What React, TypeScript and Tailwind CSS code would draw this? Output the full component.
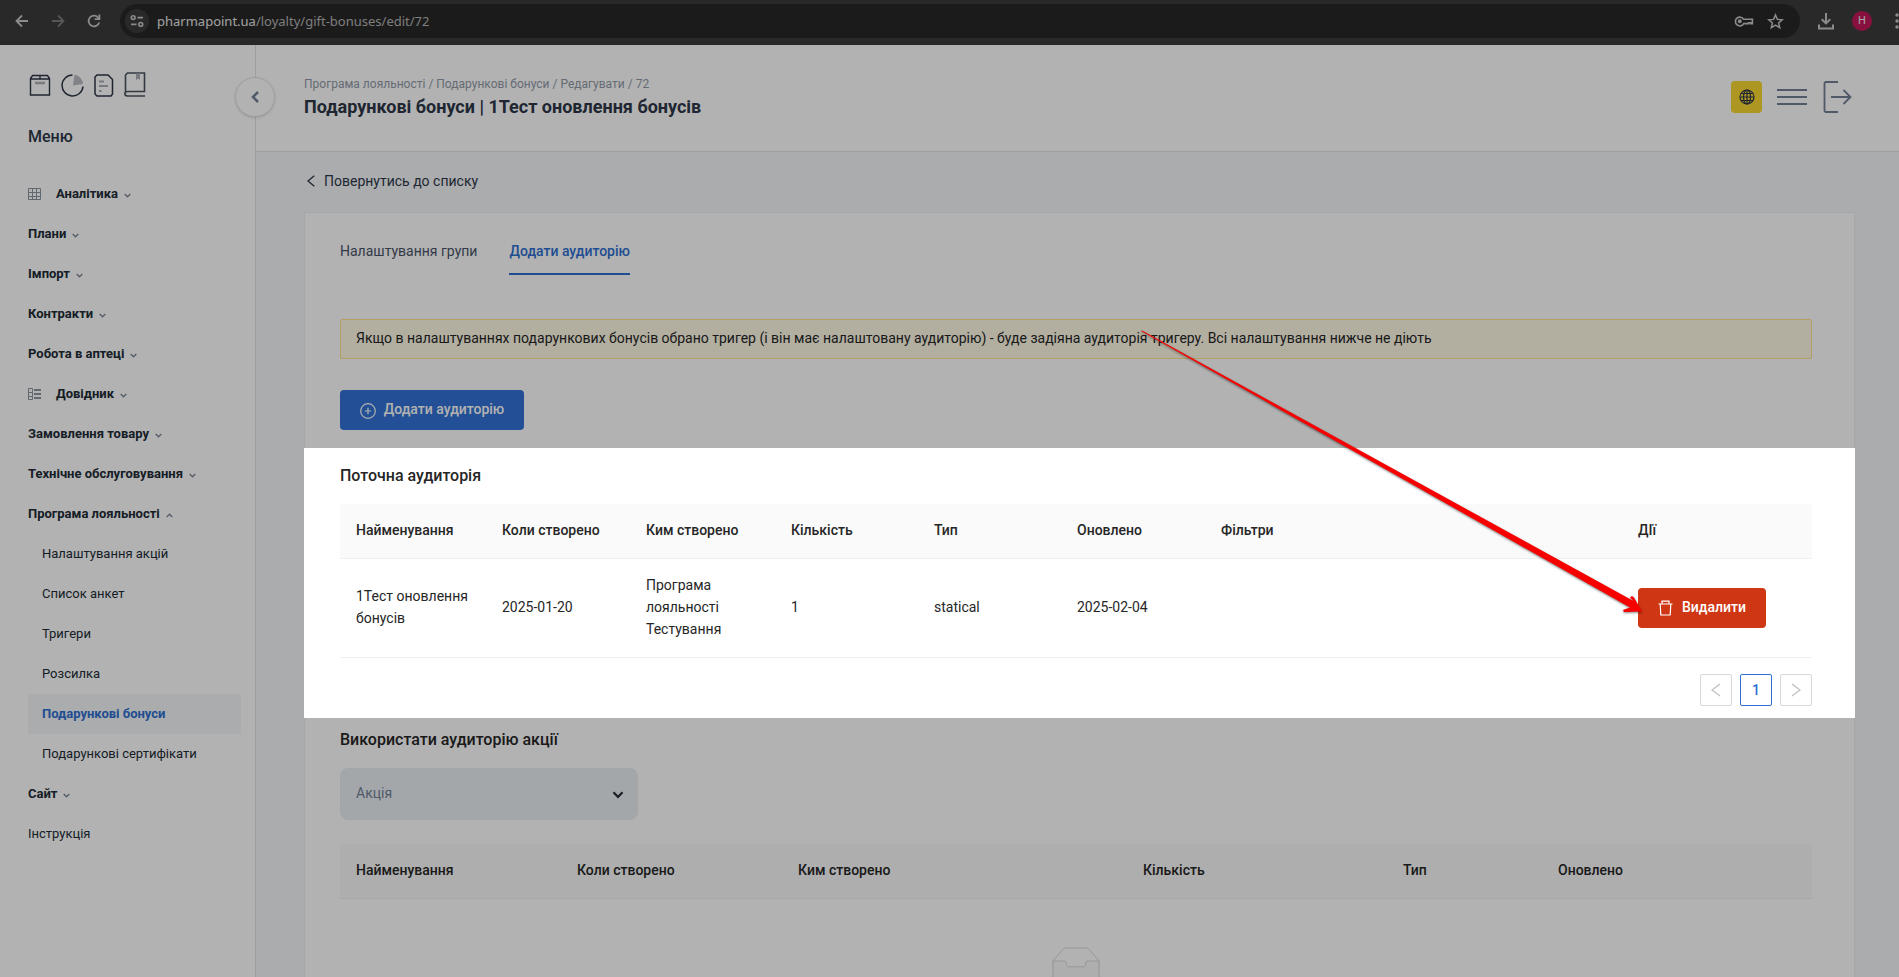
import React from "react";

type MenuItem = {
    label: string;
    icon?: "grid" | "list";
    plain?: boolean;
    open?: boolean;
    children?: string[];
};

const menu: MenuItem[] = [
    { label: "Аналітика", icon: "grid" },
    { label: "Плани" },
    { label: "Імпорт" },
    { label: "Контракти" },
    { label: "Робота в аптеці" },
    { label: "Довідник", icon: "list" },
    { label: "Замовлення товару" },
    { label: "Технічне обслуговування" },
    {
        label: "Програма лояльності",
        open: true,
        children: ["Налаштування акцій", "Список анкет", "Тригери", "Розсилка", "Подарункові бонуси", "Подарункові сертифікати"],
    },
    { label: "Сайт" },
    { label: "Інструкція", plain: true },
];

const currentRows = [
    { name: "1Тест оновлення бонусів", created: "2025-01-20", author: "Програма лояльності Тестування", count: 1, type: "statical", updated: "2025-02-04", filters: "" },
];

const BrowserBar = () => (
    <div className="flex h-[45px] shrink-0 items-center overflow-hidden bg-[#3c3c3c] pb-[3px] text-[#c7c7c7]">
        <div className="flex w-[120px] shrink-0 items-center gap-5 pl-[14px]">
            <button aria-label="Назад">
                <svg width="16" height="16" viewBox="0 0 16 16" fill="none" stroke="currentColor" strokeWidth="1.8"><path d="M14 8H3M8 2.5 2.5 8 8 13.5" /></svg>
            </button>
            <button aria-label="Вперед" className="text-[#7b7b7b]">
                <svg width="16" height="16" viewBox="0 0 16 16" fill="none" stroke="currentColor" strokeWidth="1.8"><path d="M2 8h11M8 2.5 13.5 8 8 13.5" /></svg>
            </button>
            <button aria-label="Оновити">
                <svg width="16" height="16" viewBox="0 0 16 16" fill="none" stroke="currentColor" strokeWidth="1.8"><path d="M13.2 9.5A5.4 5.4 0 1 1 12 4.3L13.2 5.5" /><path d="M13.4 1.5V6.2H8.7" /></svg>
            </button>
        </div>
        <div className="flex h-[34px] flex-1 items-center rounded-full bg-[#282828] pl-[5px] pr-4">
            <button aria-label="Дані сайту" className="flex size-6 items-center justify-center rounded-full bg-[#3c3c3c]">
                <svg width="14" height="14" viewBox="0 0 14 14" fill="none" stroke="currentColor" strokeWidth="1.6"><circle cx="3.2" cy="3.6" r="1.9" /><path d="M7.5 3.6H13M1 10.4h5.5" /><circle cx="10.8" cy="10.4" r="1.9" /></svg>
            </button>
            <span className="ml-2 flex-1 font-['Noto_Sans',sans-serif] text-[13px] leading-5 text-[#b5b5b5]">
                <span className="text-[#e6e6e6]">pharmapoint.ua</span>/loyalty/gift-bonuses/edit/72
            </span>
            <button aria-label="Паролі" className="mr-[13px]">
                <svg width="20" height="14" viewBox="0 0 20 14" fill="none" stroke="currentColor" strokeWidth="1.6"><path d="M9.6 5.3H18.4V9.6H16.8V8.8H14.6V9.6H9.7A4.4 4.4 0 1 1 9.6 5.3Z" /><circle cx="5.8" cy="7.2" r="1.2" fill="currentColor" /></svg>
            </button>
            <button aria-label="Закладка">
                <svg width="17" height="17" viewBox="0 0 17 17" fill="none" stroke="currentColor" strokeWidth="1.5"><path d="m8.5 2 1.9 4.4 4.8.4-3.6 3.1 1.1 4.7-4.2-2.5-4.2 2.5 1.1-4.7L1.8 6.8l4.8-.4Z" /></svg>
            </button>
        </div>
        <div className="ml-[18px] flex w-[81px] shrink-0 items-center">
            <button aria-label="Завантаження">
                <svg width="16" height="17" viewBox="0 0 16 17" fill="none" stroke="currentColor" strokeWidth="2"><path d="M8 0v10M3.8 6.2 8 10.4l4.2-4.2M1 11.5V15.5H15V11.5" /></svg>
            </button>
            <span className="ml-[18px] flex size-5 items-center justify-center rounded-full bg-[#c2185b] font-['Roboto',sans-serif] text-[11px] text-[#ececec]">H</span>
            <svg className="ml-[23px]" width="4" height="16" viewBox="0 0 4 16" fill="currentColor"><circle cx="2" cy="2" r="1.7" /><circle cx="2" cy="8" r="1.7" /><circle cx="2" cy="14" r="1.7" /></svg>
        </div>
    </div>
);

const ItemIcon = ({ kind }: { kind: "grid" | "list" }) => (
    <svg className="mr-[15px]" width="13" height="12" viewBox="0 0 13 12" fill="none" stroke="#8a95a3">
        {kind === "grid" ? (
            <path d="M.5.5h12v11H.5ZM.5 4.500h12M.5 8.500h12M4.500.5v11M8.500.5v11" />
        ) : (
            <path d="M.5.5h4v11h-4ZM.5 4.500h4M.5 8.500h4M6 1.500h7M6 2.500h7M6 5.500h7M6 6.500h7M6 9.500h7M6 10.500h7" />
        )}
    </svg>
);

const Sidebar = () => (
    <aside className="relative w-64 shrink-0 border-r border-[#dfe3e8] bg-white">
        <div className="flex h-[52px] items-end gap-[10px] pl-[29px]">
            <svg width="22" height="23" viewBox="0 0 22 23" fill="none" stroke="#2f3747" strokeWidth="1.400"><path d="M1.500 4.500V21h19V4.500L18.500 1.500H3.500ZM1.500 5H20.500M11 1.500V5" /><path d="M6 9h10" stroke="#aeb3ba" strokeWidth="2.600" /></svg>
            <svg width="23" height="23" viewBox="0 0 23 23" fill="none"><path d="M11.500 1A10.500 10.500 0 1 0 22 12.500" stroke="#2f3747" strokeWidth="1.500" /><path d="M13.500 0.500 12 11.500l10-1.500A10.500 10.500 0 0 0 13.500.5Z" fill="#b9bcc2" /></svg>
            <svg width="20" height="23" viewBox="0 0 20 23" fill="none" stroke="#2f3747" strokeWidth="1.500"><path d="M3 1h11l4.500 4.500V20L17 22H3L1 20V3Z" /><path d="M5 7.500h5M5 12h9M5 17h2.500" stroke="#a9aeb5" strokeWidth="2" /></svg>
            <svg width="22" height="25" viewBox="0 0 22 25" fill="none" stroke="#4b5360" strokeWidth="1.600"><path d="M21 24H3.500C0 24 0 19.500 3.500 19.500H20.500V1H3.500L1.500 3V21.500" /><path d="M12 1.500V8l2-1.500L16 8V1.500Z" fill="#a9aeb5" stroke="none" /></svg>
        </div>
        <h2 className="mt-7 pl-7 text-base font-medium leading-6 text-[#2d3748]">Меню</h2>
        <nav className="mt-[25px] pl-7 pr-[14px] text-[13px] text-[#212b36]">
            {menu.map((item) => (
                <div key={item.label}>
                    {item.plain ? (
                        <a href="#" className="flex h-10 items-center">{item.label}</a>
                    ) : (
                        <button className="flex h-10 w-full items-center font-bold" aria-expanded={!!item.open}>
                            {item.icon && <ItemIcon kind={item.icon} />}
                            {item.label}
                            <svg className="ml-[6px] mt-[3px]" width="7" height="5" viewBox="0 0 7 5" fill="none" stroke="#7c8795" strokeWidth="1.400">
                                <path d={item.open ? "M.7 4 3.500 1.200 6.300 4" : "M.7 1 3.500 3.800 6.300 1"} />
                            </svg>
                        </button>
                    )}
                    {item.children?.map((child) => (
                        <a
                            key={child}
                            href="#"
                            className={`flex h-10 items-center pl-[14px] ${child === "Подарункові бонуси" ? "bg-[#f4f6f9] font-bold text-[#2e6fd0]" : ""}`}
                        >
                            {child}
                        </a>
                    ))}
                </div>
            ))}
        </nav>
        <button aria-label="Згорнути меню" className="absolute -right-5 top-8 flex size-10 items-center justify-center rounded-full border border-[#dfe3e8] bg-white shadow-sm">
            <svg width="8" height="12" viewBox="0 0 8 12" fill="none" stroke="#718096" strokeWidth="2.500"><path d="M7 1 2 6l5 5" /></svg>
        </button>
    </aside>
);

const Header = () => (
    <header className="flex h-[107px] items-start justify-between border-b border-[#dfe3e8] bg-white pl-12 pr-[47px]">
        <div className="pt-[30px]">
            <div className="text-xs leading-[18px] text-[#919aa8]">Програма лояльності / Подарункові бонуси / Редагувати / 72</div>
            <h1 className="mt-[3px] text-lg font-bold leading-[22px] text-[#2d3748]">Подарункові бонуси | 1Тест оновлення бонусів</h1>
        </div>
        <div className="flex items-center gap-[15px] pt-9">
            <button aria-label="Мова" className="flex h-8 w-[31px] items-center justify-center rounded bg-[#f8d730]">
                <svg width="16" height="16" viewBox="0 0 16 16" fill="none" stroke="#2d3748" strokeWidth="1.200"><circle cx="8" cy="8" r="7" /><ellipse cx="8" cy="8" rx="3.500" ry="7" /><path d="M8 1v14M1 8h14M2 4.500h12M2 11.500h12" /></svg>
            </button>
            <button aria-label="Меню">
                <svg width="30" height="16" viewBox="0 0 30 16" fill="#718096"><path d="M0 0h30v2H0zM0 7h30v2H0zM0 14h30v2H0z" /></svg>
            </button>
            <button aria-label="Вийти" className="ml-px">
                <svg width="29" height="32" viewBox="0 0 29 32" fill="none" stroke="#718096" strokeWidth="1.800"><path d="M15 1H2.500L1.500 2V30L2.500 31H15M8 16H27M20.500 9 27.500 16l-7 7" /></svg>
            </button>
        </div>
    </header>
);

// Pointer that leads to the delete button
const Arrow = () => (
    <svg className="pointer-events-none absolute -bottom-1 right-[122px] max-w-none drop-shadow-[0_1px_1px_rgba(0,0,0,0.5)]" width="510" height="310" viewBox="1134 322 510 310" fill="#f60000" aria-hidden="true">
        <path d="M1141 331 1142 330.500 1633.500 601 1630 597.500 1632 596 1634 597.500 1642 611.500 1624 612 1623 610 1630 607.500Z" />
    </svg>
);

const Th = ({ children }: { children: React.ReactNode }) => (
    <th className="border-b border-[#f0f0f0] bg-[#fafafa] px-4 pb-[17px] pt-[15px] text-left font-medium">{children}</th>
);

const Td = ({ children }: { children?: React.ReactNode }) => (
    <td className="border-b border-[#f0f0f0] px-4 pb-[17px] pt-[15px]">{children}</td>
);

const CurrentAudience = () => (
    <section className="relative z-10 -mx-px h-[270px] bg-white pl-9 pr-[43px] pt-[17px] shadow-[0_0_0_3000px_rgba(0,0,0,0.3)]">
        <h2 className="text-base font-medium leading-[22px]">Поточна аудиторія</h2>
        <table className="mt-[17px] w-full table-fixed border-separate border-spacing-0 text-sm leading-[22px]">
            <colgroup>
                <col className="w-[146px]" />
                <col className="w-[144px]" />
                <col className="w-[145px]" />
                <col className="w-[143px]" />
                <col className="w-[143px]" />
                <col className="w-[144px]" />
                <col />
                <col className="w-[190px]" />
            </colgroup>
            <thead>
                <tr>
                    <Th>Найменування</Th>
                    <Th>Коли створено</Th>
                    <Th>Ким створено</Th>
                    <Th>Кількість</Th>
                    <Th>Тип</Th>
                    <Th>Оновлено</Th>
                    <Th>Фільтри</Th>
                    <Th>ДІї</Th>
                </tr>
            </thead>
            <tbody>
                {currentRows.map((row) => (
                    <tr key={row.name}>
                        <Td>{row.name}</Td>
                        <Td>{row.created}</Td>
                        <Td>{row.author}</Td>
                        <Td>{row.count}</Td>
                        <Td>{row.type}</Td>
                        <Td>{row.updated}</Td>
                        <Td>{row.filters}</Td>
                        <td className="border-b border-[#f0f0f0] p-4">
                            <div className="relative w-32">
                                <button className="flex h-10 w-32 items-center justify-center gap-[9px] rounded bg-[#cf3614] pb-[2px] text-sm font-medium text-white">
                                    <svg className="mt-[2px]" width="15" height="16" viewBox="0 0 15 16" fill="none" stroke="white" strokeWidth="1.200"><path d="M.5 4h14M4 4V1.200h7V4M2.200 4l.6 11h9.400l.6-11" /></svg>
                                    Видалити
                                </button>
                                <Arrow />
                            </div>
                        </td>
                    </tr>
                ))}
            </tbody>
        </table>
        <div className="mt-4 flex justify-end gap-2 text-sm">
            <button aria-label="Попередня" className="flex size-8 items-center justify-center rounded-xs border border-[#d9d9d9]">
                <svg width="10" height="14" viewBox="0 0 10 14" fill="none" stroke="#c0c0c0" strokeWidth="1.300"><path d="M9 1 1 7l8 6" /></svg>
            </button>
            <button className="flex size-8 items-center justify-center rounded-xs border border-[#2e6fd0] font-medium text-[#2e6fd0]">1</button>
            <button aria-label="Наступна" className="flex size-8 items-center justify-center rounded-xs border border-[#d9d9d9]">
                <svg width="10" height="14" viewBox="0 0 10 14" fill="none" stroke="#c0c0c0" strokeWidth="1.300"><path d="m1 1 8 6-8 6" /></svg>
            </button>
        </div>
    </section>
);

const PromoAudience = () => (
    <section className="pl-[35px] pr-[42px] pt-[11px]">
        <h2 className="text-base font-medium leading-[22px]">Використати аудиторію акції</h2>
        <div className="relative mt-[17px] h-[52px] w-[298px]">
            <select aria-label="Акція" className="size-full appearance-none rounded-lg bg-[#ebf0f4] px-4 pb-[2px] text-sm text-[#718096]">
                <option>Акція</option>
            </select>
            <svg className="pointer-events-none absolute right-[14px] top-[23px]" width="12" height="8" viewBox="0 0 12 8" fill="none" stroke="#222b36" strokeWidth="2.200"><path d="m1.500 1.200 4.500 4.800 4.500-4.800" /></svg>
        </div>
        <table className="mt-6 w-full table-fixed border-separate border-spacing-0 text-sm leading-[22px]">
            <colgroup>
                <col className="w-[221px]" />
                <col className="w-[221px]" />
                <col />
                <col className="w-[260px]" />
                <col className="w-[155px]" />
                <col className="w-[270px]" />
            </colgroup>
            <thead>
                <tr>
                    <Th>Найменування</Th>
                    <Th>Коли створено</Th>
                    <Th>Ким створено</Th>
                    <Th>Кількість</Th>
                    <Th>Тип</Th>
                    <Th>Оновлено</Th>
                </tr>
            </thead>
        </table>
        <div className="flex justify-center pt-12">
            <svg width="64" height="41" viewBox="0 0 64 41">
                <g transform="translate(0 1)" fill="none">
                    <ellipse fill="#f5f5f5" cx="32" cy="33" rx="32" ry="7" />
                    <g stroke="#d9d9d9">
                        <path d="M55 12.760L44.854 1.258C44.367.474 43.656 0 42.907 0H21.093c-.749 0-1.460.474-1.947 1.257L9 12.761V22h46v-9.240z" />
                        <path d="M41.613 15.931c0-1.605.994-2.930 2.227-2.931H55v18.137C55 33.260 53.680 35 52.050 35h-40.100C10.320 35 9 33.259 9 31.137V13h11.160c1.233 0 2.227 1.323 2.227 2.928v.022c0 1.605 1.005 2.901 2.237 2.901h14.752c1.232 0 2.237-1.308 2.237-2.913v-.007z" fill="#fafafa" />
                    </g>
                </g>
            </svg>
        </div>
    </section>
);

const App = () => (
    <div className="relative flex h-screen flex-col overflow-hidden font-['Roboto',sans-serif] text-[#262626]">
        <BrowserBar />
        <div className="flex min-h-0 flex-1">
            <Sidebar />
            <div className="min-w-0 flex-1 bg-[#f5f7fa]">
                <Header />
                <main className="pl-12 pr-11">
                    <a href="#" className="flex h-[60px] items-center gap-[9px] pb-[2px] pl-[3px] text-sm text-[#2d3748]">
                        <svg width="8" height="12" viewBox="0 0 8 12" fill="none" stroke="currentColor" strokeWidth="1.300"><path d="M7.300.7 1 6l6.300 5.300" /></svg>
                        Повернутись до списку
                    </a>
                    <div className="border border-[#edf0f4] bg-white">
                        <div className="h-[235px] pl-[35px] pr-[42px] pt-[17px]">
                            <div role="tablist" className="flex gap-8 text-sm leading-[22px]">
                                <button role="tab" aria-selected="false" className="h-[45px] pb-1 text-[#4a5568]">Налаштування групи</button>
                                <button role="tab" aria-selected="true" className="h-[45px] border-b-2 border-[#2e6fd0] pb-[2px] font-medium text-[#2e6fd0]">Додати аудиторію</button>
                            </div>
                            <div role="alert" className="mt-11 rounded-xs border border-[#ffe58f] bg-[#fffbe6] px-[15px] pb-[9px] pt-[7px] text-sm leading-[22px]">
                                Якщо в налаштуваннях подарункових бонусів обрано тригер (і він має налаштовану аудиторію) - буде задіяна аудиторія тригеру. Всі налаштування нижче не діють
                            </div>
                            <button className="mt-[31px] flex h-10 w-[184px] items-center justify-center gap-2 rounded bg-[#3172d6] pb-[2px] text-sm font-medium text-white">
                                <svg className="mt-[3px]" width="16" height="16" viewBox="0 0 16 16" fill="none" stroke="white" strokeWidth="1.200"><circle cx="8" cy="8" r="7.300" /><path d="M8 4.800v6.400M4.800 8h6.400" /></svg>
                                Додати аудиторію
                            </button>
                        </div>
                        <CurrentAudience />
                        <PromoAudience />
                    </div>
                </main>
            </div>
        </div>
    </div>
);

export default App;
